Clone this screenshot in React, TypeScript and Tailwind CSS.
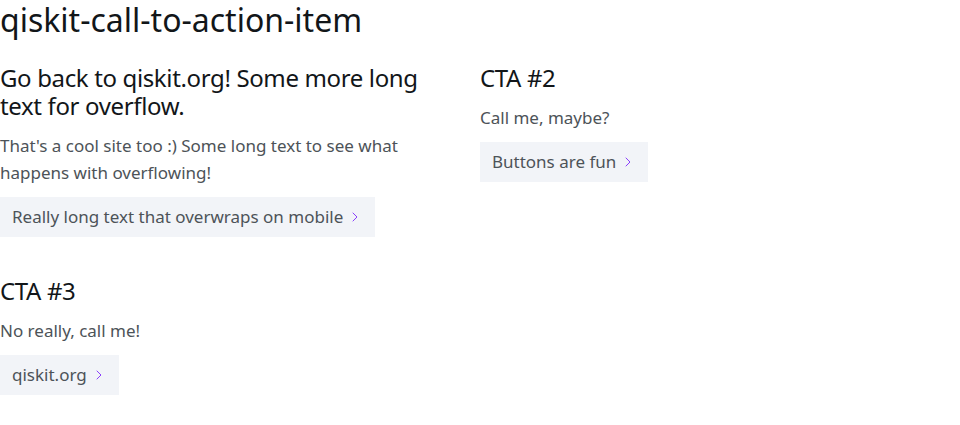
import { ChevronRight } from 'lucide-react'

interface CallToAction {
  title: string
  text: string
  label: string
}

const items: CallToAction[] = [
  {
    title: 'Go back to qiskit.org! Some more long text for overflow.',
    text: "That's a cool site too :) Some long text to see what happens with overflowing!",
    label: 'Really long text that overwraps on mobile',
  },
  {
    title: 'CTA #2',
    text: 'Call me, maybe?',
    label: 'Buttons are fun',
  },
  {
    title: 'CTA #3',
    text: 'No really, call me!',
    label: 'qiskit.org',
  },
]

function CallToActionItem({ item }: { item: CallToAction }) {
  return (
    <div className="pr-8">
      <h2 className="mb-3 text-2xl leading-7 font-normal tracking-[-0.015em] text-[#121619]">
        {item.title}
      </h2>
      <p className="mb-[11px] text-[17px] leading-[27px] text-[#4d5358]">
        {item.text}
      </p>
      <a
        href="#"
        className="inline-flex h-10 items-center gap-1 bg-[#f2f4f8] pr-3 pl-3 text-[17px] text-[#4d5358]"
      >
        {item.label}
        <ChevronRight className="size-4 text-[#8a3ffc]" strokeWidth={1.5} />
      </a>
    </div>
  )
}

export default function App() {
  return (
    <div className="bg-white font-['Noto_Sans',sans-serif]">
      <h1 className="mb-6 text-[32px] leading-10 font-normal text-[#121619]">
        qiskit-call-to-action-item
      </h1>
      <div className="grid grid-cols-2 gap-y-10">
        {items.map((item) => (
          <CallToActionItem key={item.title} item={item} />
        ))}
      </div>
    </div>
  )
}
